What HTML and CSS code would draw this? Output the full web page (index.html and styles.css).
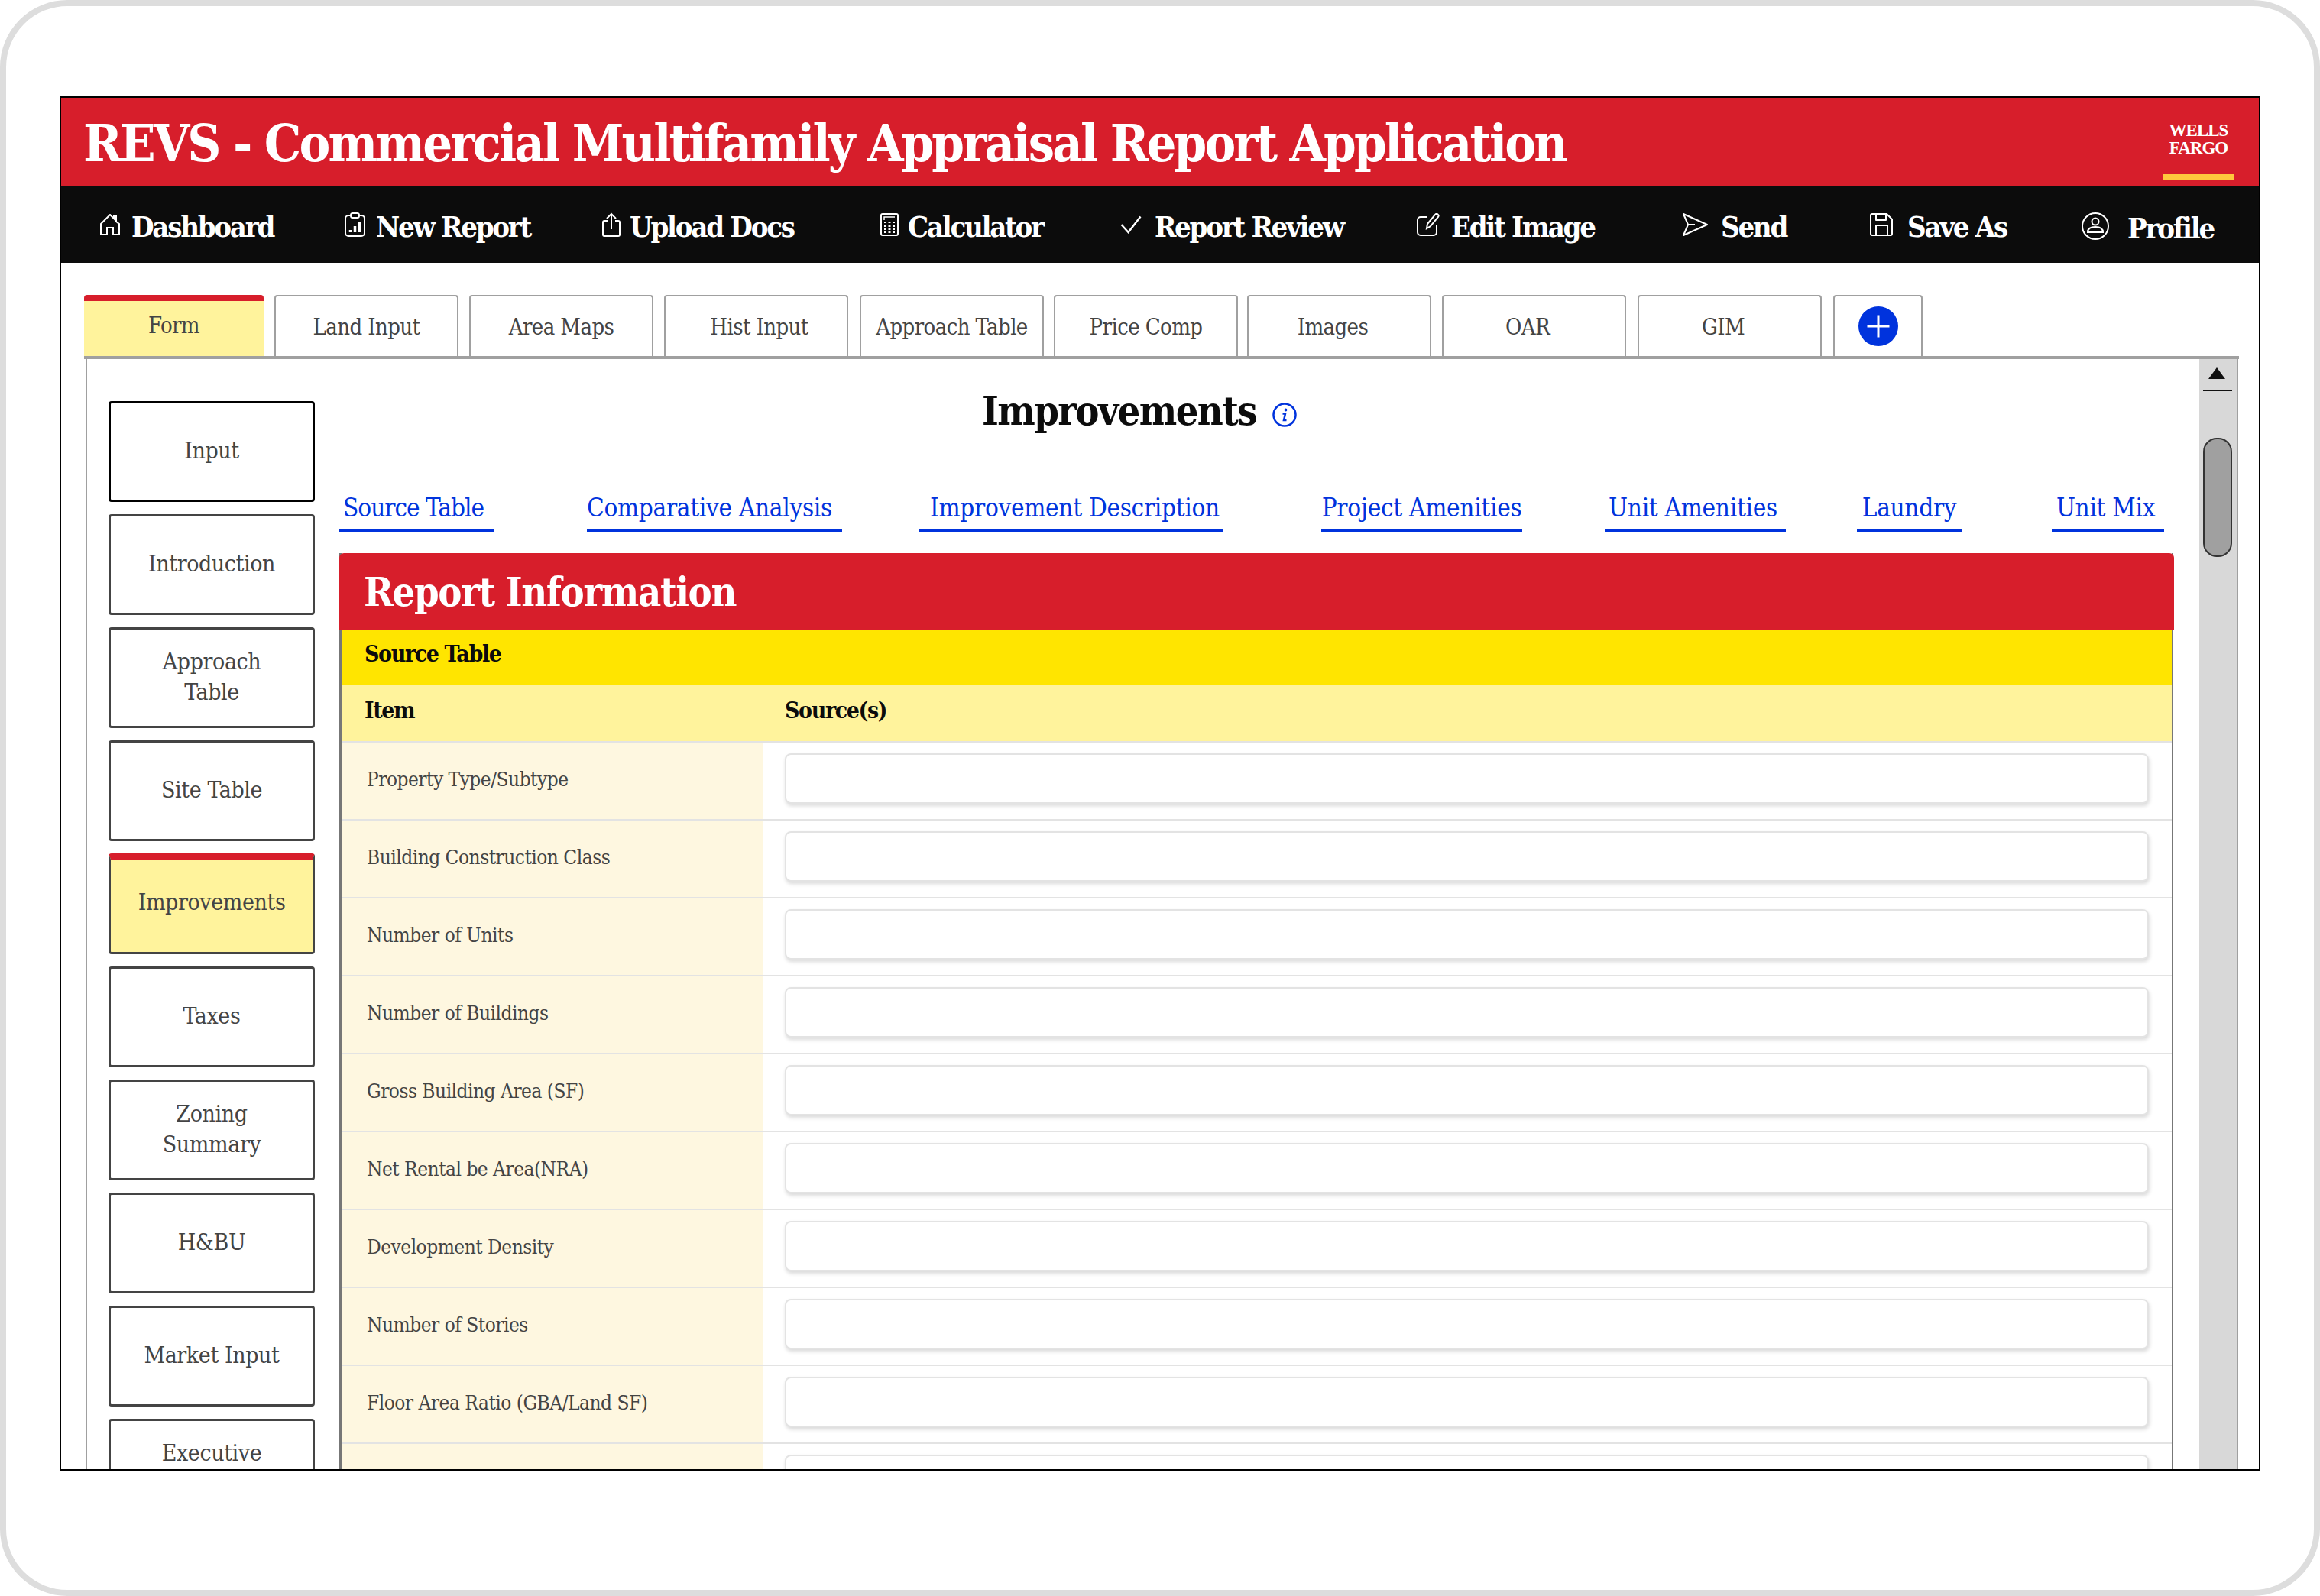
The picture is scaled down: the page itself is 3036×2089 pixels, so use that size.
FILE: index.html
```html
<!DOCTYPE html>
<html>
<head>
    <meta charset="utf-8">
    <title>REVS</title>
    <link rel="stylesheet" href="styles.css">
</head>
<body>
<div class="frame">
<div class="window">

    <header class="topbar">
        <h1>REVS - Commercial Multifamily Appraisal Report Application</h1>
        <div class="logo"><span>WELLS<br>FARGO</span></div>
    </header>

    <nav class="mainnav">
        <a class="gap-d"><svg class="ico" width="26" height="28" viewBox="0 0 26 28"><path d="M1 13 13 1l5 5V3h3v7l4 3v14h-8V18H9v9H1z"/></svg><span>Dashboard</span></a>
        <a class="gap-n"><svg class="ico" width="27" height="32" viewBox="0 0 27 32"><path d="M8 4H5a4 4 0 0 0-4 4v19a4 4 0 0 0 4 4h17a4 4 0 0 0 4-4V8a4 4 0 0 0-4-4h-3"/><rect x="8" y="1" width="11" height="6" rx="2.500"/><path d="M7.500 26v-3M13.500 26v-8M19.500 26V13" stroke-width="3.500"/></svg><span>New Report</span></a>
        <a class="gap-s"><svg class="ico" width="24" height="32" viewBox="0 0 24 32"><path d="M7 11H3a2 2 0 0 0-2 2v16a2 2 0 0 0 2 2h18a2 2 0 0 0 2-2V13a2 2 0 0 0-2-2h-4M12 22V2M6 8l6-6 6 6"/></svg><span>Upload Docs</span></a>
        <a class="gap-s"><svg class="ico" width="24" height="30" viewBox="0 0 24 30"><rect x="1" y="1" width="22" height="28" rx="2"/><path d="M5 9V5h14" stroke-width="1.500"/><path d="M5 12h3M10.500 12h3M16 12h3M5 17h3M10.500 17h3M16 17h3M5 21h3M10.500 21h3M16 21h3M5 25h3M10.500 25h3M16 25h3" stroke-width="2.200"/></svg><span>Calculator</span></a>
        <a class="gap-m"><svg class="ico" width="28" height="24" viewBox="0 0 28 24"><path d="M1.500 12l9 10L26.500 1.500" stroke-width="2.500"/></svg><span>Report Review</span></a>
        <a class="gap-d"><svg class="ico" width="30" height="30" viewBox="0 0 30 30"><path d="M13 5H5a4 4 0 0 0-4 4v16a4 4 0 0 0 4 4h17a4 4 0 0 0 4-4v-9"/><path d="M13 20l1-6L24 2a2.500 2.500 0 0 1 4 3L18 17z"/></svg><span>Edit Image</span></a>
        <a class="gap-m"><svg class="ico" width="34" height="30" viewBox="0 0 34 30"><path stroke-linejoin="round" d="M2 1l31 14L2 29l6-14zM8 15h9"/></svg><span>Send</span></a>
        <a class="gap-l"><svg class="ico" width="30" height="30" viewBox="0 0 30 30"><path stroke-linejoin="round" d="M3 1h19l7 7v19a2 2 0 0 1-2 2H3a2 2 0 0 1-2-2V3a2 2 0 0 1 2-2zM8 1v8h13V1M8 29V16h15v13"/></svg><span>Save As</span></a>
        <a class="gap-x profile"><svg class="ico" width="36" height="36" viewBox="0 0 36 36"><circle cx="18" cy="18" r="17"/><circle cx="18" cy="12" r="4.500"/><path d="M8 26c0-5 4-7 10-7s10 2 10 7z"/></svg><span>Profile</span></a>
    </nav>

    <div class="content">
        <ul class="tabs">
            <li class="tab tab-form">Form</li>
            <li class="tab">Land Input</li>
            <li class="tab">Area Maps</li>
            <li class="tab tab-wider tab-right">Hist Input</li>
            <li class="tab tab-near">Approach Table</li>
            <li class="tab tab-closer">Price Comp</li>
            <li class="tab tab-left">Images</li>
            <li class="tab tab-wider tab-left">OAR</li>
            <li class="tab tab-wider tab-left">GIM</li>
            <li class="tab tab-add"><span class="plus"></span></li>
        </ul>

        <div class="panel">
            <div class="sidebar">
                <a class="sidebtn first">Input</a>
                <a class="sidebtn">Introduction</a>
                <a class="sidebtn">Approach<br>Table</a>
                <a class="sidebtn">Site Table</a>
                <a class="sidebtn current">Improvements</a>
                <a class="sidebtn">Taxes</a>
                <a class="sidebtn">Zoning<br>Summary</a>
                <a class="sidebtn">H&amp;BU</a>
                <a class="sidebtn">Market Input</a>
                <a class="sidebtn last">Executive</a>
            </div>

            <div class="main">
                <h2 class="pagetitle">Improvements<svg class="info" width="32" height="32" viewBox="0 0 32 32"><circle cx="16" cy="16" r="14.500"/><path d="M13.500 14.500h3.500l-2 8.500h3.500"/><circle class="dot" cx="17.500" cy="9.500" r="1.900"/></svg></h2>

                <div class="links">
                    <a class="l1">Source Table</a>
                    <a class="l2">Comparative Analysis</a>
                    <a class="l3">Improvement Description</a>
                    <a class="l4">Project Amenities</a>
                    <a class="l5">Unit Amenities</a>
                    <a class="l6">Laundry</a>
                    <a class="l7">Unit Mix</a>
                </div>

                <section class="report">
                    <h3>Report Information</h3>
                    <div class="subhead">Source Table</div>
                    <div class="colhead"><div class="item">Item</div><div class="src">Source(s)</div></div>
                    <div class="row"><div class="item">Property Type/Subtype</div><div class="cell"><div class="field"></div></div></div>
                    <div class="row"><div class="item">Building Construction Class</div><div class="cell"><div class="field"></div></div></div>
                    <div class="row"><div class="item">Number of Units</div><div class="cell"><div class="field"></div></div></div>
                    <div class="row"><div class="item">Number of Buildings</div><div class="cell"><div class="field"></div></div></div>
                    <div class="row"><div class="item">Gross Building Area (SF)</div><div class="cell"><div class="field"></div></div></div>
                    <div class="row"><div class="item">Net Rental be Area(NRA)</div><div class="cell"><div class="field"></div></div></div>
                    <div class="row"><div class="item">Development Density</div><div class="cell"><div class="field"></div></div></div>
                    <div class="row"><div class="item">Number of Stories</div><div class="cell"><div class="field"></div></div></div>
                    <div class="row"><div class="item">Floor Area Ratio (GBA/Land SF)</div><div class="cell"><div class="field"></div></div></div>
                    <div class="row"><div class="item"></div><div class="cell"><div class="field"></div></div></div>
                </section>
            </div>

            <div class="scrollbar">
                <div class="arrow"></div>
                <div class="thumb"></div>
            </div>
        </div>
    </div>

</div>
</div>
</body>
</html>
```

FILE: styles.css
```css
*
{
	margin: 0;
	padding: 0;
	box-sizing: border-box;
}
html, body
{
	width: 3036px;
	height: 2089px;
	overflow: hidden;
	background: #fff;
	font-family: "DejaVu Serif", serif;
	font-stretch: condensed;
}
.frame
{
	width: 3036px;
	height: 2089px;
	border: 8px solid #ddd;
	border-radius: 88px;
	padding: 118px 70px 155px 70px;
}
.window
{
	height: 1800px;
	border: 2px solid #000;
	border-bottom-width: 3px;
	overflow: hidden;
	display: flex;
	flex-direction: column;
	background: #fff;
}

/* header */
.topbar
{
	height: 116px;
	background: #d71e2b;
	display: flex;
	justify-content: space-between;
	padding: 0 33px 0 29px;
	flex-shrink: 0;
}
.topbar h1
{
	color: #fff;
	font-size: 68px;
	font-weight: bold;
	letter-spacing: -2.9px;
	line-height: 118px;
	white-space: nowrap;
}
.logo
{
	width: 92px;
	height: 108px;
	border-bottom: 8px solid #ffc83d;
	color: #fff;
	font-family: "Liberation Serif", serif;
	font-weight: bold;
	font-size: 23px;
	letter-spacing: -1px;
	line-height: 23px;
	text-align: center;
	padding-top: 31px;
}

.mainnav
{
	height: 100px;
	background: #0c0c0c;
	flex-shrink: 0;
	display: grid;
	grid-template-columns: 320px 337px 364px 314px 388px 347px 246px 277px auto;
	padding-left: 51px;
	align-items: center;
}
.mainnav a
{
	color: #fff;
	font-size: 38px;
	font-weight: bold;
	letter-spacing: -2.3px;
	display: flex;
	align-items: center;
}
.mainnav a span { margin-top: 4px; }
.mainnav a.profile span { margin-top: 8px; }
.mainnav a.profile svg { margin-top: 4px; }
.mainnav a.gap-d { gap: 15px; }
.mainnav a.gap-n { gap: 14px; }
.mainnav a.gap-s { gap: 12px; }
.mainnav a.gap-m { gap: 17px; }
.mainnav a.gap-l { gap: 19px; }
.mainnav a.gap-x { gap: 24px; }
.ico
{
	fill: none;
	stroke: #fff;
	stroke-width: 2;
	flex-shrink: 0;
}

/* tabs */
.content
{
	flex: 1;
	min-height: 0;
	padding: 42px 28px 0 30px;
	display: flex;
	flex-direction: column;
}
.tabs
{
	list-style: none;
	display: flex;
	height: 84px;
	border-bottom: 4px solid #a0a0a0;
	flex-shrink: 0;
	width: 2820px;
}
.tab
{
	width: 241px;
	height: 80px;
	border: 2px solid #a0a0a0;
	border-bottom: 0;
	border-radius: 4px 4px 0 0;
	color: #444;
	font-size: 29px;
	letter-spacing: -0.6px;
	line-height: 80px;
	text-align: center;
	margin-right: 14px;
}
.tab-form { width: 235px; background: #fff39c; border: 0; border-top: 8px solid #d71e2b; line-height: 64px; }
.tab-wider { margin-right: 15px; }
.tab-near { margin-right: 13px; }
.tab-closer { margin-right: 12px; }
.tab-left { padding-right: 17px; }
.tab-right { padding-left: 8px; }
.tab-add { width: 117px; margin: 0; display: flex; align-items: center; justify-content: center; }
.plus
{
	width: 52px;
	height: 52px;
	border-radius: 50%;
	background: #0033dd;
	position: relative;
}
.plus::before
{
	content: "";
	position: absolute;
	left: 12px;
	top: 25px;
	width: 28px;
	height: 2px;
	background: #fff;
	box-shadow: 0 0 0 0.5px #fff;
}
.plus::after
{
	content: "";
	position: absolute;
	left: 25px;
	top: 12px;
	width: 2px;
	height: 28px;
	background: #fff;
	box-shadow: 0 0 0 0.5px #fff;
}

/* panel */
.panel
{
	flex: 1;
	min-height: 0;
	width: 2817px;
	margin-left: 2px;
	border: 2px solid #a0a0a0;
	border-top: 0;
	border-bottom: 0;
	display: flex;
	overflow: hidden;
}
.sidebar
{
	width: 298px;
	flex-shrink: 0;
	padding: 55px 0 0 28px;
}
.sidebtn
{
	display: flex;
	align-items: center;
	justify-content: center;
	width: 270px;
	height: 132px;
	margin-bottom: 16px;
	border: 3px solid #444;
	border-radius: 4px;
	color: #444;
	font-size: 30px;
	letter-spacing: -0.4px;
	line-height: 40px;
	text-align: center;
	padding-bottom: 2px;
}
.sidebtn.first
{
	border-color: #000;
}
.sidebtn.current
{
	background: #fff39c;
	border-top: 8px solid #d71e2b;
	padding-bottom: 10px;
}
.sidebtn.last
{
	align-items: flex-start;
	padding-top: 22px;
}

/* main column */
.main
{
	flex: 1;
	min-width: 0;
	padding-left: 32px;
}
.pagetitle
{
	height: 120px;
	width: 2094px;
	padding-top: 30px;
	font-size: 52px;
	letter-spacing: -1.6px;
	line-height: 76px;
	text-align: center;
	color: #0c0c0c;
}
.info
{
	fill: none;
	stroke: #0033dd;
	stroke-width: 2.500;
	vertical-align: -3px;
	margin-left: 21px;
}
.info .dot
{
	fill: #0033dd;
	stroke: none;
}
.links
{
	display: flex;
	height: 134px;
	width: 2400px;
	padding-top: 55px;
}
.links a
{
	display: block;
	height: 51px;
	color: #0033dd;
	font-size: 33px;
	letter-spacing: -0.3px;
	line-height: 40px;
	text-align: center;
	padding-bottom: 9px;
	border-bottom: 4px solid #0033dd;
	white-space: nowrap;
}
.links a.l1 { width: 202px; margin-right: 122px; padding-right: 8px; letter-spacing: -1px; }
.l2 { width: 334px; margin-right: 100px; padding-right: 18px; }
.l3 { width: 399px; margin-right: 128px; padding-left: 10px; }
.l4 { width: 263px; margin-right: 108px; }
.l5 { width: 237px; margin-right: 93px; padding-right: 6px; }
.l6 { width: 137px; margin-right: 118px; }
.l7 { width: 147px; padding-right: 6px; }

.report
{
	width: 2400px;
	border-left: 3px solid #777;
	border-right: 2px solid #777;
}
.report h3
{
	height: 100px;
	margin: 0 -3px;
	background: #d71e2b;
	border-radius: 6px 6px 0 0;
	color: #fff;
	font-size: 52px;
	letter-spacing: -1.35px;
	line-height: 102px;
	padding-left: 32px;
}
.subhead
{
	height: 72px;
	background: #ffe500;
	color: #0c0c0c;
	font-size: 30px;
	font-weight: bold;
	letter-spacing: -1.4px;
	line-height: 64px;
	padding-left: 30px;
}
.colhead
{
	display: flex;
	height: 74px;
	background: #fff39c;
	color: #0c0c0c;
	font-size: 30px;
	font-weight: bold;
	letter-spacing: -1.4px;
	line-height: 68px;
}
.colhead .item
{
	width: 551px;
	padding-left: 30px;
}
.colhead .src
{
	padding-left: 29px;
}
.row
{
	display: flex;
	height: 102px;
	border-top: 2px solid #e3e3e3;
}
.row .item
{
	width: 551px;
	background: #fef7e0;
	color: #444;
	font-size: 26px;
	letter-spacing: -0.5px;
	line-height: 97px;
	padding-left: 33px;
}
.cell
{
	flex: 1;
	padding: 14px 30px 0 29px;
}
.field
{
	height: 66px;
	border: 2px solid #e3e3e3;
	border-radius: 8px;
	background: #fff;
	box-shadow: 1px 3px 5px rgba(0, 0, 0, 0.15);
}

/* fake scrollbar */
.scrollbar
{
	width: 49px;
	margin-left: 34px;
	flex-shrink: 0;
	background: #d8d8d8;
	padding: 10px 6px 0 5px;
}
.arrow
{
	height: 32px;
	border-bottom: 2px solid #111;
	position: relative;
}
.arrow::before
{
	content: "";
	position: absolute;
	left: 7px;
	top: 1px;
	border-left: 11px solid transparent;
	border-right: 11px solid transparent;
	border-bottom: 15px solid #111;
}
.thumb
{
	margin-top: 61px;
	width: 38px;
	height: 156px;
	background: #a0a0a0;
	border: 2px solid #333;
	border-radius: 18px;
}
```
